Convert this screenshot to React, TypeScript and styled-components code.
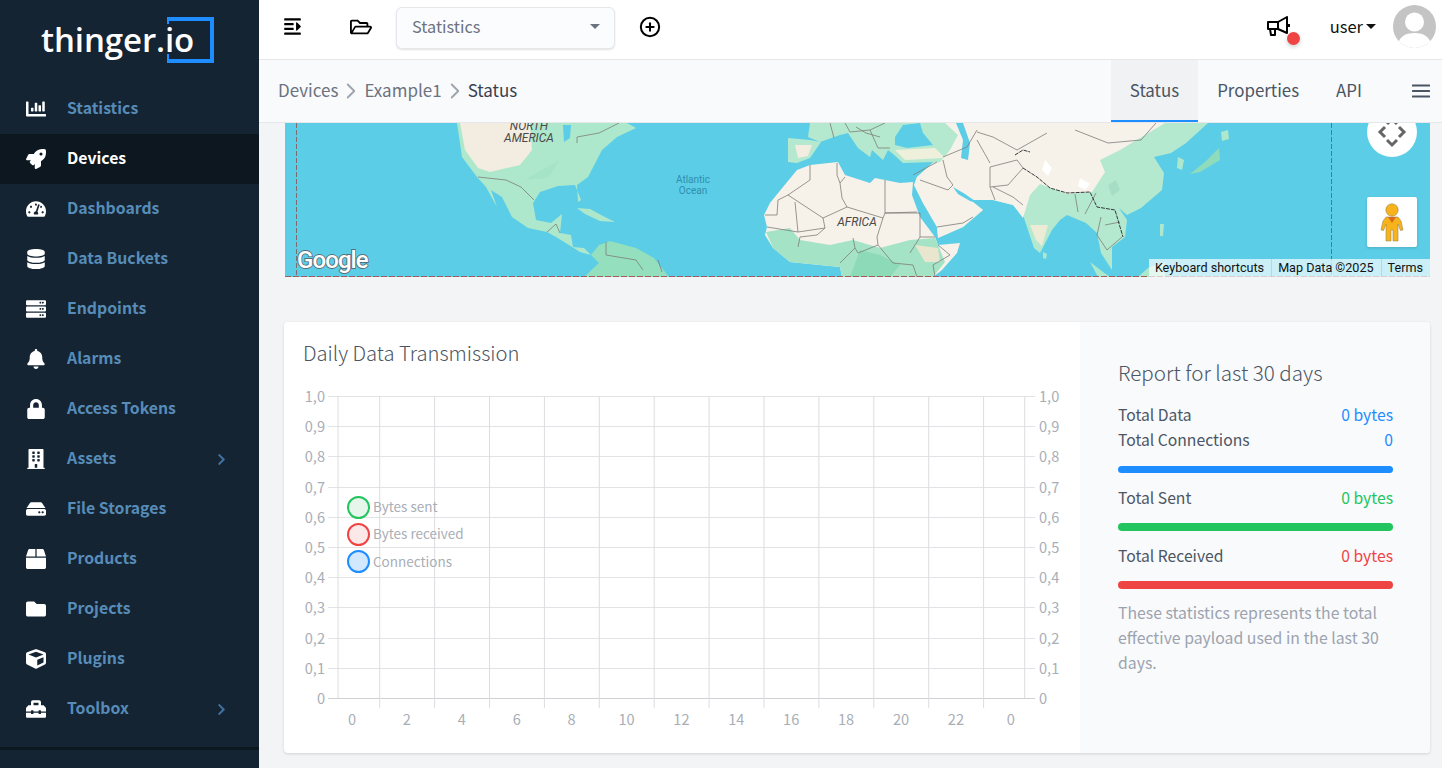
import React from "react";
import styled, { createGlobalStyle } from "styled-components";
import { ChevronRight, CirclePlus } from "lucide-react";
import {
  FaBell,
  FaBox,
  FaBuilding,
  FaChartBar,
  FaChevronRight,
  FaCube,
  FaDatabase,
  FaFolder,
  FaHdd,
  FaLock,
  FaOutdent,
  FaRegFolderOpen,
  FaRocket,
  FaServer,
  FaTachometerAlt,
  FaToolbox,
} from "react-icons/fa";

const BLUE = "#1e8dff";
const GREEN = "#22c55e";
const RED = "#ef4444";

const GlobalStyle = createGlobalStyle`
  html, body {
    margin: 0;
    height: 100%;
    overflow: hidden;
    background: #f3f4f6;
    font-family: "Noto Sans CJK SC", "Noto Sans", sans-serif;
  }
  * {
    box-sizing: border-box;
  }
`;

const Shell = styled.div`
  display: flex;
  height: 768px;
  overflow: hidden;
`;

const Sidebar = styled.aside`
  width: 259px;
  flex: none;
  background: #152433;
  display: flex;
  flex-direction: column;
`;

const LogoRow = styled.div`
  height: 84px;
  flex: none;
  padding: 17px 0 0 41px;
  position: relative;
`;

const Wordmark = styled.span`
  font-family: "Open Sans", sans-serif;
  font-size: 33px;
  font-weight: 600;
  line-height: 45px;
  letter-spacing: -0.1px;
  color: #fff;
`;

const LogoBracket = styled.svg`
  position: absolute;
  left: 167px;
  top: 17px;
`;

const NavList = styled.nav`
  height: 650px;
  flex: none;
`;

const NavItem = styled.div<{ $active?: boolean }>`
  height: 50px;
  padding: 0 31px 0 26px;
  display: flex;
  align-items: center;
  font-size: 15.8px;
  font-weight: 700;
  color: ${(p) => (p.$active ? "#fff" : "#578cb8")};
  background: ${(p) => (p.$active ? "#0c1720" : "transparent")};
`;

const NavIcon = styled.span`
  width: 20px;
  margin-right: 21px;
  display: flex;
  justify-content: center;
  color: #fff;
  font-size: 20px;
`;

const NavLabel = styled.span`
  padding-bottom: 4px;
`;

const NavChevron = styled(FaChevronRight)`
  margin-left: auto;
  font-size: 13px;
  color: #3f729e;
`;

const SidebarRule = styled.div`
  height: 3px;
  margin-top: 13px;
  flex: none;
  background: #0c1720;
`;

const Main = styled.main`
  flex: 1;
  min-width: 0;
  display: flex;
  flex-direction: column;
`;

const TopBar = styled.header`
  height: 60px;
  flex: none;
  background: #fff;
  border-bottom: 1px solid #e5e7eb;
  display: flex;
  align-items: flex-start;
  color: #000;
`;

const TopIcon = styled.span<{ $width: number }>`
  width: ${(p) => p.$width}px;
  height: 53px;
  flex: none;
  display: flex;
  align-items: center;
  justify-content: center;
`;

const OutdentIcon = styled(FaOutdent)`
  transform: scaleX(-1);
`;

const ViewSelect = styled.div`
  width: 219px;
  height: 42px;
  margin-top: 7px;
  flex: none;
  padding: 0 14px 4px 15px;
  border: 1px solid #e5e7eb;
  border-radius: 6px;
  box-shadow: 0 1px 2px rgba(0, 0, 0, 0.12);
  background: #fbfcfd;
  display: flex;
  align-items: center;
  justify-content: space-between;
  font-size: 16.3px;
  color: #6b7280;
`;

const Caret = styled.span<{ $color: string; $size: number }>`
  width: 0;
  height: 0;
  flex: none;
  border-left: ${(p) => p.$size}px solid transparent;
  border-right: ${(p) => p.$size}px solid transparent;
  border-top: ${(p) => p.$size}px solid ${(p) => p.$color};
`;

const TopRight = styled.div`
  margin-left: auto;
  display: flex;
  align-items: flex-start;
  padding-right: 6px;
`;

const NoticeButton = styled.span`
  width: 30px;
  height: 52px;
  padding-left: 2px;
  position: relative;
  display: flex;
  align-items: center;
  color: #000;
`;

const NoticeDot = styled.span`
  position: absolute;
  left: 22px;
  top: 32px;
  width: 13px;
  height: 13px;
  border-radius: 50%;
  background: ${RED};
  box-shadow: 0 2px 4px rgba(0, 0, 0, 0.2);
`;

const UserName = styled.span`
  margin-left: 35px;
  height: 52px;
  display: flex;
  align-items: center;
  gap: 3px;
  font-size: 16.5px;
  color: #111;
`;

const Avatar = styled.svg`
  margin: 5px 0 0 17px;
  border-radius: 50%;
`;

const SubBar = styled.div`
  height: 63px;
  flex: none;
  padding: 0 12px 0 19px;
  background: #f9fafb;
  border-bottom: 1px solid #e5e7eb;
  display: flex;
  align-items: stretch;
`;

const Crumbs = styled.div`
  padding-bottom: 4px;
  display: flex;
  align-items: center;
  font-size: 17px;
  color: #6b7280;
`;

const CrumbCurrent = styled.span`
  color: #374151;
`;

const CrumbSeparator = styled(ChevronRight)`
  margin-top: 3px;
  color: #9ca3af;
`;

const Tabs = styled.div`
  margin-left: auto;
  display: flex;
  align-items: stretch;
`;

const Tab = styled.div<{ $active?: boolean; $pad: number }>`
  padding: 0 ${(p) => p.$pad}px 1px;
  display: flex;
  align-items: center;
  font-size: 16.9px;
  color: #4b5563;
  background: ${(p) => (p.$active ? "#f1f2f4" : "transparent")};
  border-bottom: 2px solid ${(p) => (p.$active ? BLUE : "transparent")};
`;

const TabMenu = styled.svg`
  margin-left: 32px;
  align-self: center;
`;

const Content = styled.div`
  flex: 1;
  min-height: 0;
  padding: 0 12px 0 25px;
  overflow: hidden;
`;

const MapFrame = styled.div`
  height: 154px;
  margin-left: 1px;
  position: relative;
  overflow: hidden;
  background: #5bcde6;
`;

const MapCanvas = styled.svg`
  display: block;
`;

const MoveControl = styled.svg`
  position: absolute;
  right: 13px;
  top: -16px;
`;

const PegmanBox = styled.div`
  position: absolute;
  right: 13px;
  top: 74px;
  width: 50px;
  height: 50px;
  border-radius: 2px;
  background: #fff;
  box-shadow: 0 1px 3px rgba(0, 0, 0, 0.15);
  display: flex;
  align-items: center;
  justify-content: center;
`;

const Attribution = styled.div`
  position: absolute;
  right: 0;
  bottom: 0;
  height: 18px;
  display: flex;
  align-items: center;
  background: rgba(255, 255, 255, 0.68);
  font-family: Roboto, sans-serif;
  font-size: 12.6px;
  color: #111;
`;

const AttributionItem = styled.span`
  padding: 0 7px 0 6px;
  line-height: 18px;
  & + & {
    border-left: 1px solid #c9cfd3;
  }
`;

const Card = styled.section`
  margin-top: 45px;
  height: 431px;
  display: flex;
  background: #fff;
  border-radius: 4px;
  box-shadow: 0 1px 3px rgba(0, 0, 0, 0.14);
  overflow: hidden;
`;

const ChartPane = styled.div`
  width: 796px;
  flex: none;
  position: relative;
`;

const CardTitle = styled.h3`
  margin: 0;
  padding: 18px 0 0 19px;
  height: 58px;
  font-size: 20.2px;
  line-height: 26px;
  font-weight: 300;
  color: #4b5563;
`;

const ChartCanvas = styled.svg`
  display: block;
`;

const ChartLabel = styled.text`
  font-size: 14.6px;
  fill: #a9aeb6;
`;

const Legend = styled.div`
  position: absolute;
  left: 63px;
  top: 173.5px;
  display: flex;
  flex-direction: column;
  gap: 4px;
`;

const LegendRow = styled.div`
  height: 23.3px;
  display: flex;
  align-items: center;
  gap: 3px;
  font-size: 13.5px;
  color: #a9aeb6;
`;

const LegendDot = styled.span<{ $color: string; $fill: string }>`
  width: 23px;
  height: 23px;
  border-radius: 50%;
  border: 2px solid ${(p) => p.$color};
  background: ${(p) => p.$fill};
`;

const LegendLabel = styled.span`
  padding-bottom: 2px;
`;

const ReportPane = styled.div`
  flex: 1;
  padding: 37px 37px 0 38px;
  background: #f9fafb;
`;

const ReportTitle = styled.h3`
  margin: 0 0 18px;
  font-size: 20.6px;
  line-height: 26px;
  font-weight: 300;
  color: #4b5563;
`;

const StatRow = styled.div`
  height: 25px;
  padding-bottom: 3px;
  display: flex;
  align-items: center;
  justify-content: space-between;
  font-size: 15.7px;
  color: #4b5563;
`;

const StatValue = styled.span<{ $color: string }>`
  color: ${(p) => p.$color};
`;

const StatBar = styled.div<{ $color: string; $height: number; $top: number }>`
  height: ${(p) => p.$height}px;
  margin: ${(p) => p.$top}px 0 13px;
  border-radius: 4px;
  background: ${(p) => p.$color};
`;

const ReportNote = styled.p`
  margin: -2px 0 0;
  font-size: 15.8px;
  line-height: 25px;
  color: #9ca3af;
`;

const navItems = [
  { label: "Statistics", icon: <FaChartBar /> },
  { label: "Devices", icon: <FaRocket />, active: true },
  { label: "Dashboards", icon: <FaTachometerAlt /> },
  { label: "Data Buckets", icon: <FaDatabase /> },
  { label: "Endpoints", icon: <FaServer /> },
  { label: "Alarms", icon: <FaBell /> },
  { label: "Access Tokens", icon: <FaLock /> },
  { label: "Assets", icon: <FaBuilding />, more: true },
  { label: "File Storages", icon: <FaHdd /> },
  { label: "Products", icon: <FaBox /> },
  { label: "Projects", icon: <FaFolder /> },
  { label: "Plugins", icon: <FaCube /> },
  { label: "Toolbox", icon: <FaToolbox />, more: true },
];

// map shapes use page coordinates, the viewBox maps them into the frame
const land = {
  northAmerica:
    "457,123 462,157 477,177 486,187 497,207 491,190 502,197 512,217 528,228 547,232 556,237 569,245 580,252 591,255 584,248 573,247 571,235 560,233 562,214 551,223 536,220 533,203 540,192 558,186 575,185 581,200 578,202 577,185 588,177 602,150 617,137 636,128 627,123",
  southAmerica:
    "591,255 599,245 610,241 636,248 654,258 669,277 584,277 599,263",
  africa:
    "764,215 770,203 783,187 797,170 810,165 838,162 845,175 870,183 875,178 900,183 913,182 912,195 920,217 935,237 938,245 960,243 957,253 942,270 933,277 842,277 840,267 790,262 773,248 765,235 767,227",
  sahel:
    "766,232 790,228 800,240 830,245 853,240 880,248 910,240 935,238 938,245 945,262 933,277 842,277 840,267 790,262 773,248",
  iberia: "788,138 810,140 821,142 810,158 797,163 788,162",
  eurasia:
    "810,123 808,137 820,142 840,135 848,133 858,148 870,157 872,150 883,160 888,150 893,154 903,163 933,162 917,177 914,185 915,187 923,203 937,227 938,238 963,227 983,210 973,202 960,195 953,187 967,200 993,200 1013,205 1023,215 1034,248 1040,253 1052,230 1060,220 1067,215 1086,223 1097,233 1101,253 1112,270 1112,247 1125,237 1127,220 1119,208 1127,215 1141,208 1162,190 1164,173 1154,157 1171,153 1186,143 1208,123",
  middleEast:
    "914,185 915,187 923,203 937,227 938,238 963,227 983,210 973,202 960,195 953,187 967,200 993,200 1013,205 1023,218 1030,195 1040,184 1067,194 1092,192 1105,172 1100,160 1120,150 1165,123 945,123 958,135 950,150 940,162 933,163 917,177",
};

const seas = [
  "895,137 903,125 920,123 923,133 933,145 907,148 895,145",
  "956,123 963,123 970,143 968,160 961,158 963,140",
  "953,187 965,194 978,203 970,201 958,194",
];

const islands = [
  { points: "577,208 590,209 603,216 615,222 600,221 585,214", color: "#aee8cc" },
  { points: "1221,132 1228,130 1229,139 1222,141", color: "#aee8cc" },
  { points: "1219,148 1220,160 1200,172 1190,174 1205,162", color: "#8fdcbc" },
  { points: "1178,157 1184,160 1182,170 1177,168", color: "#aee8cc" },
  { points: "1043,252 1047,254 1046,259 1043,258", color: "#aee8cc" },
  { points: "1160,224 1164,224 1163,236 1160,236", color: "#aee8cc" },
  { points: "1090,262 1103,272 1110,277 1098,277", color: "#aee8cc" },
  { points: "1138,277 1148,268 1165,262 1165,277", color: "#aee8cc" },
];

const borders = [
  "577,143 577,137 599,133 619,123",
  "478,177 506,180 521,187 534,200",
  "547,232 556,224 560,233",
  "606,242 606,255 636,260 643,270",
  "658,260 662,272",
  "788,195 810,180 810,165",
  "788,195 823,218 847,207 842,198 840,183 837,175 837,163",
  "840,183 845,177",
  "847,207 883,218 885,213 885,180",
  "885,213 917,212",
  "883,218 877,237 878,245 858,253 855,248 853,238",
  "855,248 840,263",
  "878,245 893,263 913,265 917,277",
  "885,213 920,213 920,227 920,237 935,237",
  "910,253 920,237",
  "765,215 777,215 778,200 788,195",
  "795,202 798,232 767,227",
  "798,232 825,228 823,218",
  "825,228 817,235 800,237 798,247",
  "938,245 950,255 933,265 935,277",
  "937,227 963,223 973,217",
  "920,180 948,190 953,185",
  "943,160 947,177 953,185",
  "913,175 937,162",
  "943,157 967,147 977,130",
  "990,167 990,187 995,200",
  "990,187 1008,185 1023,168 1017,160 990,167",
  "977,140 990,163",
  "977,132 993,137 1017,150 1047,133",
  "1075,130 1108,143 1141,140 1156,123",
  "993,187 1013,197 1023,205",
  "830,123 834,138",
  "845,123 850,132 870,130 885,123",
  "870,130 878,148 890,148",
  "856,127 866,133 880,137",
  "1075,194 1078,212",
  "1096,193 1085,214",
  "1101,217 1097,235 1107,250 1122,237",
  "1105,225 1120,222",
];

const darkBorders = [
  "1023,168 1037,177 1050,188 1067,193 1090,192 1097,207 1115,210 1123,237",
  "1015,155 1023,150 1030,152",
];

const yTicks = ["1,0", "0,9", "0,8", "0,7", "0,6", "0,5", "0,4", "0,3", "0,2", "0,1", "0"];
const xTicks = ["0", "2", "4", "6", "8", "10", "12", "14", "16", "18", "20", "22", "0"];

function WorldMap() {
  return (
    <MapCanvas width="1145" height="154" viewBox="285 123 1145 154">
      <defs>
        <filter id="soft">
          <feGaussianBlur stdDeviation="0.45" />
        </filter>
        <filter id="softer">
          <feGaussianBlur stdDeviation="0.25" />
        </filter>
      </defs>
      <g filter="url(#soft)">
        <polygon points={land.northAmerica} fill="#aee8cc" />
        <polygon points="460,123 530,123 532,150 520,165 490,172 478,168 465,150" fill="#f3ece0" />
        <polygon points="525,180 545,168 560,160 548,178" fill="#a6e4c7" />
        <polygon points="563,125 571,125 570,138 564,142" fill="#5bcde6" />
        <polygon points={land.southAmerica} fill="#94dfbe" />
        <polygon points={land.eurasia} fill="#b4e9d0" />
        <polygon points={land.iberia} fill="#b4e9d0" />
        <polygon points="795,145 812,145 808,156 798,158" fill="#f3ece0" />
        <polygon points={land.middleEast} fill="#f6f1e9" />
        <polygon points="895,150 935,148 945,158 905,160" fill="#eef0dc" />
        <polygon points="1030,225 1048,225 1042,246 1036,240" fill="#ecebd6" />
        <polygon points="1045,160 1052,168 1048,176 1042,170" fill="#ffffff" />
        <polygon points="1080,178 1090,184 1085,190 1078,186" fill="#ffffff" />
        <polygon points="1108,185 1116,180 1120,190 1112,196" fill="#a6dec5" />
        <polygon points={land.africa} fill="#f6f1e9" />
        <polygon points={land.sahel} fill="#a4e3c6" />
        <polygon points="860,250 880,255 900,265 890,277 850,277" fill="#8ddab8" />
        <polygon points="915,245 938,248 940,262 925,262" fill="#e9e6cf" />
        {seas.map((points) => (
          <polygon key={points} points={points} fill="#5bcde6" />
        ))}
        {islands.map((item) => (
          <polygon key={item.points} points={item.points} fill={item.color} />
        ))}
        <polygon points="867,160 881,166 878,171" fill="#5bcde6" />
      </g>
      <g filter="url(#softer)">
        {borders.map((points) => (
          <polyline key={points} points={points} fill="none" stroke="#7d7d78" strokeWidth="0.8" />
        ))}
        {darkBorders.map((points) => (
          <polyline key={points} points={points} fill="none" stroke="#33383a" strokeWidth="1" strokeDasharray="4 1" />
        ))}
      </g>
      <line x1="296.5" y1="123" x2="296.5" y2="276" stroke="#7b6d70" strokeDasharray="5 2" />
      <line x1="1331.5" y1="123" x2="1331.5" y2="276" stroke="#6c6f75" strokeDasharray="5 2" />
      <line x1="285" y1="276.5" x2="1430" y2="276.5" stroke="#a15c5c" strokeDasharray="6 2" />
      <g fontFamily="Roboto, sans-serif" fontStyle="italic" fontSize="12" fill="#4a4a4a" textAnchor="middle">
        <text x="529" y="130">NORTH</text>
        <text x="529" y="142">AMERICA</text>
        <text x="857" y="226">AFRICA</text>
      </g>
      <g fontFamily="Roboto, sans-serif" fontSize="10" fill="#2f8fae" textAnchor="middle">
        <text x="693" y="183">Atlantic</text>
        <text x="693" y="194">Ocean</text>
      </g>
      <text
        x="297"
        y="268"
        fontFamily="Roboto, sans-serif"
        fontWeight="500"
        fontSize="24"
        letterSpacing="-0.9"
        fill="#fff"
        stroke="#566f78"
        strokeWidth="1.8"
        paintOrder="stroke"
      >
        Google
      </text>
    </MapCanvas>
  );
}

function Pegman() {
  return (
    <svg width="24" height="40" viewBox="0 0 24 38">
      <circle cx="12" cy="7" r="6.2" fill="#f7b21c" stroke="#9a8a55" strokeWidth="0.6" />
      <path
        d="M6 14h12l3 4 2 9-2.5.5L18 21v17h-5V27h-2v11H6V21l-2.5 6.5L1 27l2-9z"
        fill="#f7b21c"
        stroke="#9a8a55"
        strokeWidth="0.6"
      />
      <path d="M8 14h8l-4 6z" fill="#d96a1c" />
    </svg>
  );
}

function MegaphoneIcon() {
  return (
    <svg width="23" height="20" viewBox="0 0 23 20" fill="none" stroke="#000" strokeWidth="2" strokeLinejoin="round">
      <path d="M1 6h10v7H1z" />
      <path d="M11 6l9-5v16l-9-4" />
      <path d="M3 13l1 6h4v-6" />
      <path d="M22 8v3" />
    </svg>
  );
}

function DailyChart() {
  const left = 338;
  const right = 1024.7;
  const top = 396;
  const step = 30.2;
  const bottom = top + step * 10;
  const columns = Array.from({ length: 12 }, (_, i) => 379.7 + i * 54.9);

  return (
    <ChartCanvas width="796" height="373" viewBox="284 380 796 373">
      {yTicks.map((tick, i) => {
        const y = Math.round(top + i * step) + 0.5;
        return (
          <g key={i}>
            <line x1="328" y1={y} x2="1035" y2={y} stroke={i === 10 ? "#cfd1d4" : "#e2e3e5"} />
            <ChartLabel x="325" y={y + 5} textAnchor="end">
              {tick}
            </ChartLabel>
            <ChartLabel x="1039" y={y + 5}>
              {tick}
            </ChartLabel>
          </g>
        );
      })}
      <line x1={left} y1={top} x2={left} y2={bottom} stroke="#dcdde0" />
      <line x1={right} y1={top} x2={right} y2={bottom} stroke="#dcdde0" />
      {columns.map((x) => (
        <line key={x} x1={x} y1={top} x2={x} y2={bottom + 10} stroke="#dcdde0" />
      ))}
      {xTicks.map((tick, i) => (
        <ChartLabel key={i} x={352 + i * 54.9} y="725" textAnchor="middle">
          {tick}
        </ChartLabel>
      ))}
    </ChartCanvas>
  );
}

export default function App() {
  return (
    <Shell>
      <GlobalStyle />
      <Sidebar>
        <LogoRow>
          <Wordmark>thinger.io</Wordmark>
          <LogoBracket width="47" height="46" viewBox="0 0 47 46">
            <path d="M0 7V2h45v42H0v-7" fill="none" stroke={BLUE} strokeWidth="4" />
          </LogoBracket>
        </LogoRow>
        <NavList>
          {navItems.map((item) => (
            <NavItem key={item.label} $active={item.active}>
              <NavIcon>{item.icon}</NavIcon>
              <NavLabel>{item.label}</NavLabel>
              {item.more && <NavChevron />}
            </NavItem>
          ))}
        </NavList>
        <SidebarRule />
      </Sidebar>
      <Main>
        <TopBar>
          <TopIcon $width={67}>
            <OutdentIcon size={19} />
          </TopIcon>
          <TopIcon $width={70}>
            <FaRegFolderOpen size={22} />
          </TopIcon>
          <ViewSelect>
            Statistics
            <Caret $color="#6b7280" $size={5} />
          </ViewSelect>
          <TopIcon $width={70}>
            <CirclePlus size={22} strokeWidth={2.2} />
          </TopIcon>
          <TopRight>
            <NoticeButton>
              <MegaphoneIcon />
              <NoticeDot />
            </NoticeButton>
            <UserName>
              user
              <Caret $color="#111" $size={5} />
            </UserName>
            <Avatar width="43" height="43" viewBox="0 0 43 43">
              <rect width="43" height="43" fill="#c4c4c4" />
              <circle cx="21.5" cy="17" r="9.5" fill="#fff" />
              <path d="M4 43c1-11 8-15 17.5-15S38 32 39 43z" fill="#fff" />
            </Avatar>
          </TopRight>
        </TopBar>
        <SubBar>
          <Crumbs>
            Devices
            <CrumbSeparator size={26} strokeWidth={1.7} />
            Example1
            <CrumbSeparator size={26} strokeWidth={1.7} />
            <CrumbCurrent>Status</CrumbCurrent>
          </Crumbs>
          <Tabs>
            <Tab $active $pad={19}>
              Status
            </Tab>
            <Tab $pad={19}>Properties</Tab>
            <Tab $pad={18}>API</Tab>
            <TabMenu width="18" height="14" viewBox="0 0 18 14" fill="#4b5563">
              <rect y="0.5" width="18" height="2" rx="0.5" />
              <rect y="6" width="18" height="2" rx="0.5" />
              <rect y="11.5" width="18" height="2" rx="0.5" />
            </TabMenu>
          </Tabs>
        </SubBar>
        <Content>
          <MapFrame>
            <WorldMap />
            <MoveControl width="50" height="50" viewBox="0 0 50 50">
              <circle cx="25" cy="25" r="25" fill="#fff" />
              <g fill="none" stroke="#666" strokeWidth="3">
                <path d="M20 17l5-5 5 5" />
                <path d="M20 33l5 5 5-5" />
                <path d="M18 20l-5 5 5 5" />
                <path d="M32 20l5 5-5 5" />
              </g>
            </MoveControl>
            <PegmanBox>
              <Pegman />
            </PegmanBox>
            <Attribution>
              <AttributionItem>Keyboard shortcuts</AttributionItem>
              <AttributionItem>Map Data ©2025</AttributionItem>
              <AttributionItem>Terms</AttributionItem>
            </Attribution>
          </MapFrame>
          <Card>
            <ChartPane>
              <CardTitle>Daily Data Transmission</CardTitle>
              <DailyChart />
              <Legend>
                <LegendRow>
                  <LegendDot $color={GREEN} $fill="#e6f6eb" />
                  <LegendLabel>Bytes sent</LegendLabel>
                </LegendRow>
                <LegendRow>
                  <LegendDot $color={RED} $fill="#fde8e8" />
                  <LegendLabel>Bytes received</LegendLabel>
                </LegendRow>
                <LegendRow>
                  <LegendDot $color={BLUE} $fill="#d2e8ff" />
                  <LegendLabel>Connections</LegendLabel>
                </LegendRow>
              </Legend>
            </ChartPane>
            <ReportPane>
              <ReportTitle>Report for last 30 days</ReportTitle>
              <StatRow>
                Total Data
                <StatValue $color={BLUE}>0 bytes</StatValue>
              </StatRow>
              <StatRow>
                Total Connections
                <StatValue $color={BLUE}>0</StatValue>
              </StatRow>
              <StatBar $color={BLUE} $height={7} $top={13} />
              <StatRow>
                Total Sent
                <StatValue $color={GREEN}>0 bytes</StatValue>
              </StatRow>
              <StatBar $color={GREEN} $height={8} $top={12} />
              <StatRow>
                Total Received
                <StatValue $color={RED}>0 bytes</StatValue>
              </StatRow>
              <StatBar $color={RED} $height={8} $top={12} />
              <ReportNote>
                These statistics represents the total effective payload used in the last 30 days.
              </ReportNote>
            </ReportPane>
          </Card>
        </Content>
      </Main>
    </Shell>
  );
}
